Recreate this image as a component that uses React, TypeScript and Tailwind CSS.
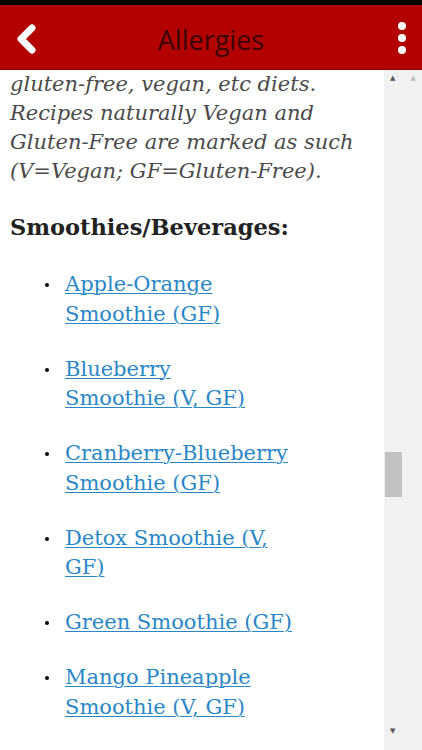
import React from "react";

const recipes: string[][] = [
  ["Apple-Orange", "Smoothie (GF)"],
  ["Blueberry", "Smoothie (V, GF)"],
  ["Cranberry-Blueberry", "Smoothie (GF)"],
  ["Detox Smoothie (V,", "GF)"],
  ["Green Smoothie (GF)"],
  ["Mango Pineapple", "Smoothie (V, GF)"],
];

function Header() {
  return (
    <div className="border-t-[5px] border-black">
      <div className="relative flex h-[65px] items-center justify-center border-b border-[#8a0000] bg-[#b30000]">
        <button className="absolute left-[10px] top-[14px] p-1">
          <svg width="24" height="32" viewBox="0 0 24 32">
            <path
              d="M18 5 L7 16 L18 27"
              fill="none"
              stroke="white"
              strokeWidth="7"
              strokeLinecap="round"
              strokeLinejoin="round"
            />
          </svg>
        </button>
        <h1 className="font-['Open_Sans',sans-serif] text-[27px] leading-none text-[#3a0606] pt-[4px]">
          Allergies
        </h1>
        <button className="absolute right-[16px] top-[17px] flex flex-col gap-[4px]">
          <span className="h-[8px] w-[8px] rounded-full bg-white" />
          <span className="h-[8px] w-[8px] rounded-full bg-white" />
          <span className="h-[8px] w-[8px] rounded-full bg-white" />
        </button>
      </div>
    </div>
  );
}

function Scrollbar() {
  return (
    <div className="relative flex w-[38px] shrink-0 flex-col bg-[#f1f1f1]">
      <div className="flex justify-between px-[6px] pt-[5px]">
        <span className="text-[7px] leading-none text-[#555]">▲</span>
        <span className="text-[7px] leading-none text-[#bbb]">▲</span>
      </div>
      <div className="ml-[1px] mt-[370px] h-[45px] w-[17px] bg-[#c1c1c1]" />
      <div className="mt-auto pb-[10px] pl-[6px]">
        <span className="text-[7px] leading-none text-[#555]">▼</span>
      </div>
    </div>
  );
}

export default function App() {
  return (
    <div className="flex h-[750px] w-[422px] flex-col overflow-hidden bg-white font-['DejaVu_Serif',serif]">
      <Header />
      <div className="flex flex-1">
        <div className="flex-1 pl-[10px]">
          <p className="text-[21px] italic leading-[29px] text-[#4a4a4a]">
            gluten-free, vegan, etc diets.
            <br />
            Recipes naturally Vegan and
            <br />
            Gluten-Free are marked as such
            <br />
            (V=Vegan; GF=Gluten-Free).
          </p>
          <h2 className="mt-[27px] text-[22.5px] font-bold leading-[29px] text-[#222]">
            Smoothies/Beverages:
          </h2>
          <ul className="mt-[28px] flex flex-col gap-[25.5px]">
            {recipes.map((lines, index) => (
              <li key={index} className="flex">
                <span className="ml-[35px] mt-[13px] h-[4px] w-[4px] shrink-0 rounded-full bg-black" />
                <a
                  href="#"
                  className="ml-[16px] text-[21px] leading-[29.5px] text-[#2a87c6] underline decoration-1 underline-offset-2"
                >
                  {lines.map((line, i) => (
                    <React.Fragment key={i}>
                      {i > 0 && <br />}
                      {line}
                    </React.Fragment>
                  ))}
                </a>
              </li>
            ))}
          </ul>
        </div>
        <Scrollbar />
      </div>
    </div>
  );
}
